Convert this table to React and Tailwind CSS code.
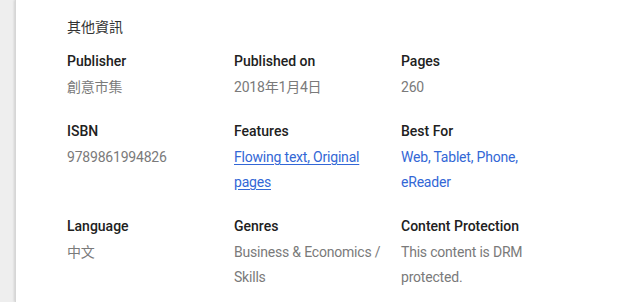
const font = { fontFamily: 'Roboto, "Noto Sans CJK TC", sans-serif' };

const rows = [
  [
    { label: "Publisher", value: ["創意市集"] },
    { label: "Published on", value: ["2018年1月4日"] },
    { label: "Pages", value: ["260"] },
  ],
  [
    { label: "ISBN", value: ["9789861994826"] },
    { label: "Features", value: ["Flowing text, Original", "pages"], link: "underline" },
    { label: "Best For", value: ["Web, Tablet, Phone,", "eReader"], link: "plain" },
  ],
  [
    { label: "Language", value: ["中文"] },
    { label: "Genres", value: ["Business & Economics /", "Skills"] },
    { label: "Content Protection", value: ["This content is DRM", "protected."] },
  ],
];

const Cell = ({ label, value, link }) => {
  const valueClass =
    link === "underline"
      ? "text-[#3367d6] underline underline-offset-2"
      : link === "plain"
        ? "text-[#3367d6]"
        : "text-[#7a7a7a]";
  return (
    <div>
      <div className="text-sm leading-6 font-medium text-[#212121] pt-px">{label}</div>
      <div className={`mt-[2px] text-sm leading-[25px] tracking-[-0.2px] ${valueClass}`}>
        {value.map((line, i) => (
          <span key={i}>
            {i > 0 && <br />}
            {line}
          </span>
        ))}
      </div>
    </div>
  );
};

export default function App() {
  return (
    <div className="flex h-[302px] w-[640px] overflow-hidden bg-[#eeeeee]" style={font}>
      <div className="w-[15px] shrink-0" />
      <div className="flex-1 bg-white border-l border-[#d6d6d6] shadow-[-1px_0_2px_rgba(0,0,0,0.12)] pl-[51px] pt-[15px]">
        <h2 className="text-sm leading-6 text-[#333333] mb-[9px]">其他資訊</h2>
        <div className="grid grid-cols-[167px_167px_220px] gap-y-[18px]">
          {rows.flat().map((c) => (
            <Cell key={c.label} {...c} />
          ))}
        </div>
      </div>
    </div>
  );
}
